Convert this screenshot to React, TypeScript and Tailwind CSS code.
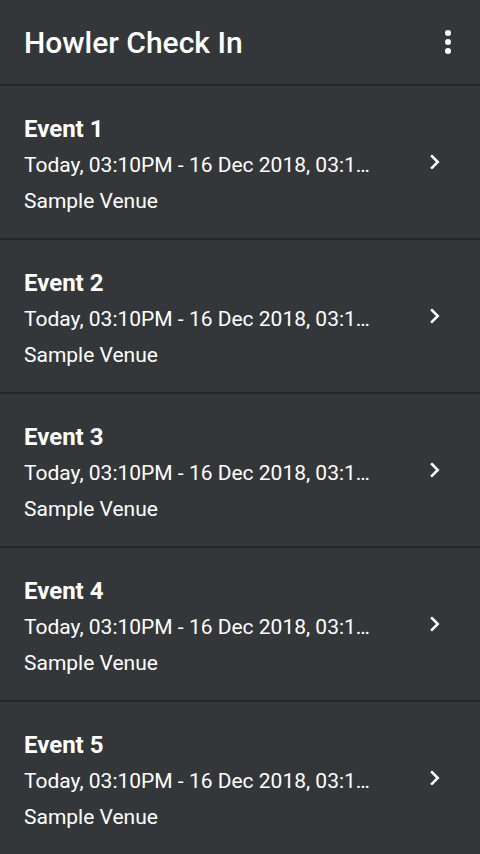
const events = [1, 2, 3, 4, 5].map((n) => ({
  id: n,
  name: `Event ${n}`,
  when: 'Today, 03:10PM - 16 Dec 2018, 03:10PM',
  venue: 'Sample Venue',
}));

function Chevron() {
  return (
    <svg width="24" height="24" viewBox="0 0 24 24" className="shrink-0">
      <path d="M10 6.2 15.8 12 10 17.8" fill="none" stroke="#fff" strokeWidth="2.5" strokeLinecap="square" />
    </svg>
  );
}

export default function App() {
  return (
    <div className="w-[480px] h-[854px] overflow-hidden bg-[#33373a] text-white" style={{ fontFamily: 'Roboto, "Noto Sans", sans-serif' }}>
      <header className="h-[86px] flex items-center justify-between pl-6 pr-[29px] border-b-2 border-[#252829]">
        <h1 className="text-[30px] font-medium leading-9 pt-[2px]">Howler Check In</h1>
        <div className="flex flex-col gap-[3px] items-center">
          <span className="w-[6px] h-[6px] rounded-full bg-white" />
          <span className="w-[6px] h-[6px] rounded-full bg-white" />
          <span className="w-[6px] h-[6px] rounded-full bg-white" />
        </div>
      </header>
      <ul>
        {events.map((e) => (
          <li key={e.id} className="h-[154px] border-b-2 border-[#252829] flex items-center pl-6 pr-[34px]">
            <div className="flex-1 min-w-0 pt-[6px]">
              <div className="text-[24px] font-bold leading-9">{e.name}</div>
              <div className="text-[21px] leading-9 truncate w-[352px]">{e.when}</div>
              <div className="text-[21px] leading-9">{e.venue}</div>
            </div>
            <Chevron />
          </li>
        ))}
      </ul>
    </div>
  );
}
